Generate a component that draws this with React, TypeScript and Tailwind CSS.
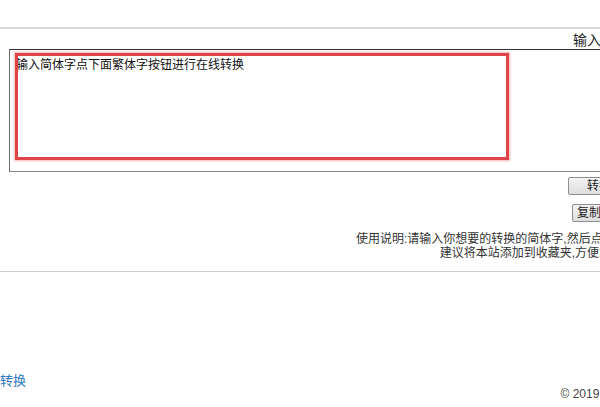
import React from 'react';

/* ========== Converter page (cropped view) ========== */

const font = "font-['Liberation_Sans','Noto_Sans_CJK_SC',sans-serif]";

function ToolButton({ label, className }: { label: string; className?: string }) {
  return (
    <button
      type="button"
      className={`h-[18px] border border-[#8e8e8e] rounded-[2px] bg-gradient-to-b from-[#f4f4f4] to-[#dedede] text-[12px] leading-[16px] text-[#222] ${className ?? ''}`}
    >
      {label}
    </button>
  );
}

export default function App() {
  return (
    <div className={`w-[600px] h-[407px] overflow-hidden bg-white ${font}`}>
      <div className="w-[666px] flex flex-col">
        {/* top spacing + rule */}
        <div className="h-[27px]" />
        <div className="border-t-2 border-[#d9d9d9]" />

        {/* ===== Input area ===== */}
        <div className="pl-[9px] flex flex-col">
          <div className="mt-[3px] pr-[5px] text-right text-[14px] leading-[17px] text-[#222]">
            输入简体中文:
          </div>

          <div className="relative">
            <textarea
              readOnly
              defaultValue="输入简体字点下面繁体字按钮进行在线转换"
              className="block w-full h-[123px] resize-none border border-[#8a8a8a] border-t-[#333] border-l-[#6f6f6f] bg-white pl-[6px] pt-[7px] text-[12px] leading-[16px] text-[#111] outline-none"
            />
            {/* red highlight box drawn over the textarea */}
            <div className="absolute left-[6px] top-[4px] w-[494px] h-[107px] border-[3px] border-[#dd4448] shadow-[0_0_2px_1px_#f6b3b3] pointer-events-none" />
          </div>

          {/* ===== Buttons ===== */}
          <div className="flex flex-col items-end">
            <ToolButton label="转换成繁体" className="mt-[5px] w-[98px]" />
            <ToolButton label="复制繁体字结果" className="mt-[9px] px-[4px]" />
          </div>

          {/* ===== Usage notes ===== */}
          <div className="mt-[10px] text-right text-[12px] leading-[14px] text-[#333]">
            <p>使用说明:请输入你想要的转换的简体字,然后点击转换按钮!</p>
            <p>建议将本站添加到收藏夹,方便您下次使用~</p>
          </div>
        </div>

        <div className="mt-[11px] border-t border-[#cfcfcf]" />

        {/* ===== Footer ===== */}
        <div className="flex justify-between items-start">
          <a href="#" className="mt-[100px] text-[13px] leading-[18px] text-[#2f78c4]">
            转换
          </a>
          <span className="mt-[114px] text-[12px] leading-[16px] text-[#444]">
            © 2019 简繁体转换.
          </span>
        </div>
      </div>
    </div>
  );
}
